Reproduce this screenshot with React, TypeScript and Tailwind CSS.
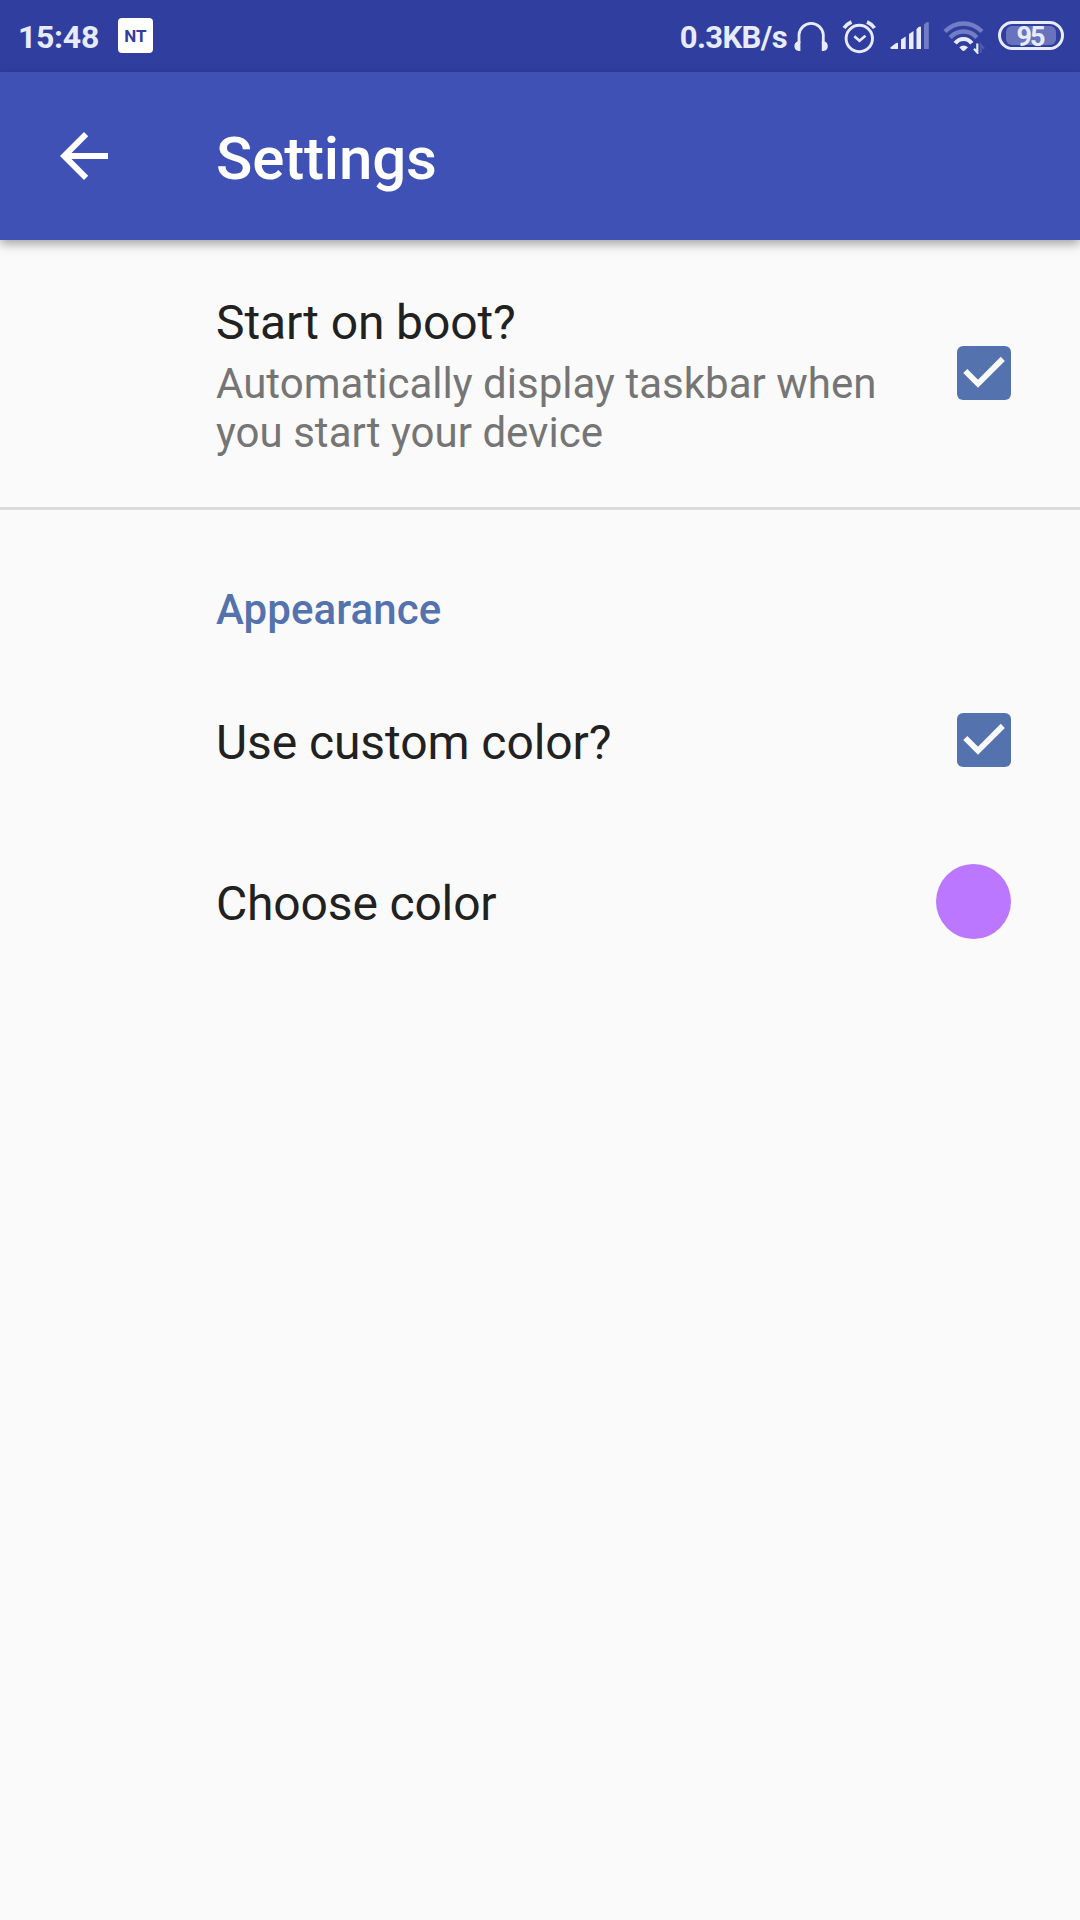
import React from "react";

function Headphones() {
  return (
    <svg width="34" height="31" viewBox="0 0 34 31" fill="none" className="ml-[7px]">
      <path d="M5 22V13.500A12.200 12.200 0 0 1 29.300 13.500V22" stroke="#e8ebfb" strokeWidth="2.800" />
      <path d="M6.400 20.500V30H4.800C2 29.500.400 28 .400 25.200S2 21 3.600 20.500Z M27.800 20.500V30H29.500C32.300 29.500 33.800 28 33.800 25.200S32.300 21 30.600 20.500Z" fill="#e8ebfb" />
    </svg>
  );
}

function Alarm() {
  return (
    <svg width="34" height="34" viewBox="0 0 34 34" fill="none" stroke="#e8ebfb" className="ml-[14px]">
      <circle cx="17.300" cy="18.500" r="13.200" strokeWidth="2.900" />
      <path d="M12.300 16.300l5.200 4.500 6-5" strokeWidth="2.600" />
      <path d="M2 8Q4.800 4 9.500 2" strokeWidth="3.600" />
      <path d="M25 2Q29.700 4 32.500 8" strokeWidth="3.600" />
    </svg>
  );
}

function Signal() {
  return (
    <svg width="39" height="29" viewBox="0 0 39 29" className="ml-[14px]">
      <g fill="#e8ebfb">
        <path d="M.500 26.300L5.500 22.500Q8 20.800 8 23V28H1.500Q0 28 .500 26.300Z" />
        <path d="M11 18.500L15.700 15.500V28H11Z" />
        <path d="M19 13L23.500 10V28H19Z" />
        <path d="M26.500 8Q30 4.500 31 6V28H26.500Z" />
      </g>
      <path d="M34 3.500Q37.500 0 38.800 1.500V28H34Z" fill="#737dc3" />
    </svg>
  );
}

function Wifi() {
  return (
    <svg width="42" height="33" viewBox="0 0 42 33" fill="none" className="ml-[14px]">
      <path d="M2 10.500Q10 2.500 20.500 2.500T39 10.500" stroke="#737dc3" strokeWidth="4.300" />
      <path d="M7.200 16.500Q12.500 10.500 20.500 10.500T33.800 16.500" stroke="#737dc3" strokeWidth="4.300" />
      <path d="M12.200 22.300Q15.500 18 20.500 18T28.800 22.300" stroke="#e8ebfb" strokeWidth="4.200" />
      <path d="M16.300 26.200Q20.500 22.700 25 26.200L22 29.300Q20.500 30.600 19 29.300Z" fill="#e8ebfb" />
      <path d="M34.300 22.500V31.500L31 27.800" stroke="#e8ebfb" strokeWidth="2.200" />
      <path d="M37.800 32V24L41.200 27.800" stroke="#4e58ad" strokeWidth="2.200" />
    </svg>
  );
}

function StatusBar() {
  return (
    <div className="flex h-[72px] items-start bg-[#303f9f] pl-[18px] pr-[16px] text-[#e8ebfb]">
      <span className="mt-[19px] text-[32px] leading-[37px] font-bold tracking-[-0.300px]">15:48</span>
      <span className="mt-[18px] ml-[19px] flex h-[35px] w-[35px] items-center justify-center rounded-[4px] bg-white pt-[1px] text-[17px] leading-none font-bold text-[#303f9f]">
        NT
      </span>
      <div className="ml-auto flex pt-[20px]">
        <span className="-mt-[1px] text-[31px] leading-[37px] font-bold tracking-[-0.600px]">0.3KB/s</span>
        <div className="pt-[1px]"><Headphones /></div>
        <Alarm />
        <div className="pt-[1px]"><Signal /></div>
        <div className="pt-[1px]"><Wifi /></div>
        <div className="mt-[1px] ml-[13px] flex h-[29px] w-[66px] items-center justify-center rounded-full border-[3px] border-[#e8ebfb]">
          <span className="flex h-[19px] w-[50px] items-center justify-center rounded-[6px] bg-[#6973bd] pt-[3px] pr-[2px] text-[27px] leading-none font-bold tracking-[-2px]">
            95
          </span>
        </div>
      </div>
    </div>
  );
}

function Checkbox() {
  return (
    <span role="checkbox" aria-checked="true" className="block h-[54px] w-[54px] rounded-[6px] bg-[#5472ad]">
      <svg width="54" height="54" viewBox="0 0 54 54" fill="none">
        <path d="M8.300 25L21 37.700L45.800 12.900" stroke="#fafafa" strokeWidth="5.800" />
      </svg>
    </span>
  );
}

export default function App() {
  return (
    <div className="flex h-[1920px] w-[1080px] flex-col overflow-hidden bg-[#fafafa] font-[Roboto,sans-serif] text-[#212121]">
      <StatusBar />
      <header className="flex h-[168px] items-center bg-[#3f51b5] pl-[60px] text-white shadow-[0_4px_10px_rgba(0,0,0,0.35)]">
        <svg width="48" height="48" viewBox="0 0 48 48" fill="#ffffff">
          <path d="M48 21H11.500L28.200 4.200L24 0L0 24L24 48L28.200 43.800L11.500 27H48Z" />
        </svg>
        <h1 className="mt-[5px] ml-[108px] text-[60px] leading-[70px] font-medium tracking-[-0.150px]">Settings</h1>
      </header>

      <main className="flex flex-col">
        <section className="flex h-[270px] items-center justify-between border-b-[3px] border-[#dadada] pr-[69px] pl-[216px]">
          <div className="pt-[4px]">
            <h2 className="text-[48px] leading-[56px] tracking-[-0.120px]">Start on boot?</h2>
            <p className="mt-[8px] w-[680px] text-[42px] leading-[49px] tracking-[0.020px] text-[#757575]">
              Automatically display taskbar when you start your device
            </p>
          </div>
          <div className="pb-[1px]">
            <Checkbox />
          </div>
        </section>

        <h3 className="mt-[75px] pl-[216px] text-[42px] leading-[49px] font-medium tracking-[0.100px] text-[#5472ad]">Appearance</h3>

        <section className="mt-[26px] flex h-[160px] items-center justify-between pr-[69px] pl-[216px]">
          <span className="pt-[5px] text-[48px] leading-[56px] tracking-[-0.080px]">Use custom color?</span>
          <Checkbox />
        </section>
        <section className="flex h-[163px] items-center justify-between pr-[69px] pl-[216px]">
          <span className="pt-[5px] text-[48px] leading-[56px] tracking-[-0.160px]">Choose color</span>
          <span className="h-[75px] w-[75px] rounded-full bg-[#bb77ff]" />
        </section>
      </main>
    </div>
  );
}
